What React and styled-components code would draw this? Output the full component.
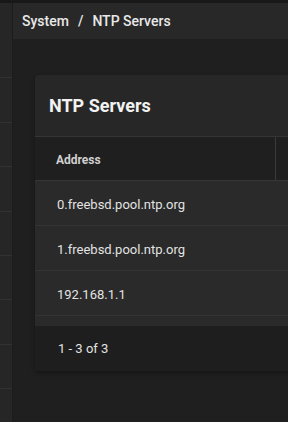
import styled, { createGlobalStyle } from 'styled-components';

const GlobalStyle = createGlobalStyle`
    html, body {
        margin: 0;
        padding: 0;
        background: #1f1f1f;
        font-family: Roboto, 'Liberation Sans', sans-serif;
        overflow: hidden;
    }
    * {
        box-sizing: border-box;
    }
`;

const Layout = styled.div`
    width: 288px;
    height: 422px;
    display: flex;
    flex-direction: column;
    overflow: hidden;
`;

const TopStrip = styled.div`
    height: 3px;
    flex: none;
    background: #181818;
`;

const Body = styled.div`
    flex: 1;
    display: grid;
    grid-template-columns: 12px 1fr;
    column-gap: 1px;
    background: #1c1c1c;
    min-height: 0;
`;

const Sidebar = styled.aside`
    background: #262626;
    padding-top: 31px;
`;

const SideItem = styled.div`
    height: 44.4px;
    border-bottom: 1px solid #323232;
`;

const Main = styled.main`
    background: #1f1f1f;
    overflow: hidden;
    min-width: 0;
`;

const PageHeader = styled.header`
    height: 36px;
    background: #282828;
    display: flex;
    align-items: center;
    padding-left: 9px;
    color: #e8e8e8;
    font-size: 14px;
    font-weight: 500;
    white-space: nowrap;

    span.sep {
        margin: 0 9px;
    }
`;

const Content = styled.div`
    padding: 36px 0 0 22px;
`;

const Card = styled.section`
    width: 420px;
    background: #272727;
    border-radius: 4px 0 0 4px;
    box-shadow: 0 2px 4px rgba(0, 0, 0, 0.35);
    overflow: hidden;
`;

const CardTitle = styled.h2`
    margin: 0;
    height: 62px;
    display: flex;
    align-items: center;
    padding: 0 0 1px 14px;
    font-size: 18px;
    font-weight: 700;
    color: #f2f2f2;
    border-bottom: 1px solid #353535;
`;

const Table = styled.div`
    display: flex;
    flex-direction: column;
`;

const HeadRow = styled.div`
    height: 44px;
    display: grid;
    grid-template-columns: 241px 1fr;
    background: #1f1f1f;
    border-bottom: 1px solid #353535;
`;

const HeadCell = styled.div`
    display: flex;
    align-items: center;
    padding: 3px 0 0 21px;
    font-size: 12px;
    font-weight: 700;
    color: #d0d0d0;
    border-right: ${(p) => (p.$divider ? '1px solid #3a3a3a' : 'none')};
`;

const Row = styled.div`
    height: 45px;
    display: flex;
    align-items: center;
    padding: 3px 0 0 22px;
    background: #2a2a2a;
    border-bottom: 1px solid #343434;
    font-size: 13px;
    color: #e2e2e2;
`;

const Spacer = styled.div`
    height: 10px;
    background: #2a2a2a;
`;

const Footer = styled.div`
    height: 45px;
    display: flex;
    align-items: center;
    padding-left: 23px;
    background: #1e1e1e;
    font-size: 13px;
    color: #e2e2e2;
`;

export default function App() {
    const servers = ['0.freebsd.pool.ntp.org', '1.freebsd.pool.ntp.org', '192.168.1.1'];
    return (
        <Layout>
            <GlobalStyle />
            <TopStrip />
            <Body>
                <Sidebar>
                    {Array.from({ length: 9 }).map((_, i) => (
                        <SideItem key={i} />
                    ))}
                </Sidebar>
                <Main>
                    <PageHeader>
                        System<span className="sep">/</span>NTP Servers
                    </PageHeader>
                    <Content>
                        <Card>
                            <CardTitle>NTP Servers</CardTitle>
                            <Table>
                                <HeadRow>
                                    <HeadCell $divider>Address</HeadCell>
                                    <HeadCell />
                                </HeadRow>
                                {servers.map((s) => (
                                    <Row key={s}>{s}</Row>
                                ))}
                                <Spacer />
                                <Footer>1 - 3 of 3</Footer>
                            </Table>
                        </Card>
                    </Content>
                </Main>
            </Body>
        </Layout>
    );
}
